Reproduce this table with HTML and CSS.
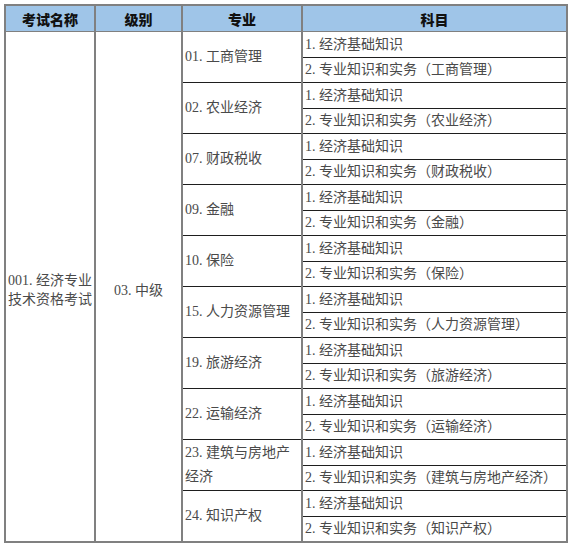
FILE: index.html
```html
<!DOCTYPE html>
<html lang="zh">
<head>
<meta charset="utf-8">
<link rel="stylesheet" href="styles.css">
</head>
<body>
<table class="grid">
  <colgroup>
    <col class="c1"><col class="c2"><col class="c3"><col class="c4">
  </colgroup>
  <thead>
    <tr class="head"><th>考试名称</th><th>级别</th><th>专业</th><th>科目</th></tr>
  </thead>
  <tbody>
    <tr class="r1"><td class="exam" rowspan="20">001. 经济专业技术资格考试</td><td class="level" rowspan="20">03. 中级</td><td class="major" rowspan="2">01. 工商管理</td><td class="subj first">1. 经济基础知识</td></tr>
    <tr class="r2"><td class="subj">2. 专业知识和实务（工商管理）</td></tr>
    <tr class="r1"><td class="major" rowspan="2">02. 农业经济</td><td class="subj first">1. 经济基础知识</td></tr>
    <tr class="r2"><td class="subj">2. 专业知识和实务（农业经济）</td></tr>
    <tr class="r1"><td class="major" rowspan="2">07. 财政税收</td><td class="subj first">1. 经济基础知识</td></tr>
    <tr class="r2"><td class="subj">2. 专业知识和实务（财政税收）</td></tr>
    <tr class="r1"><td class="major" rowspan="2">09. 金融</td><td class="subj first">1. 经济基础知识</td></tr>
    <tr class="r2"><td class="subj">2. 专业知识和实务（金融）</td></tr>
    <tr class="r1"><td class="major" rowspan="2">10. 保险</td><td class="subj first">1. 经济基础知识</td></tr>
    <tr class="r2"><td class="subj">2. 专业知识和实务（保险）</td></tr>
    <tr class="r1"><td class="major" rowspan="2">15. 人力资源管理</td><td class="subj first">1. 经济基础知识</td></tr>
    <tr class="r2"><td class="subj">2. 专业知识和实务（人力资源管理）</td></tr>
    <tr class="r1"><td class="major" rowspan="2">19. 旅游经济</td><td class="subj first">1. 经济基础知识</td></tr>
    <tr class="r2"><td class="subj">2. 专业知识和实务（旅游经济）</td></tr>
    <tr class="r1"><td class="major" rowspan="2">22. 运输经济</td><td class="subj first">1. 经济基础知识</td></tr>
    <tr class="r2"><td class="subj">2. 专业知识和实务（运输经济）</td></tr>
    <tr class="r1"><td class="major" rowspan="2">23. 建筑与房地产经济</td><td class="subj first">1. 经济基础知识</td></tr>
    <tr class="r2"><td class="subj">2. 专业知识和实务（建筑与房地产经济）</td></tr>
    <tr class="r1"><td class="major" rowspan="2">24. 知识产权</td><td class="subj first">1. 经济基础知识</td></tr>
    <tr class="r2"><td class="subj">2. 专业知识和实务（知识产权）</td></tr>
  </tbody>
</table>
</body>
</html>
```
FILE: styles.css
```css
html, body {
  margin: 0;
  padding: 0;
  background: #ffffff;
}
body {
  padding: 4px 0 0 4px;
}
.grid {
  border-collapse: collapse;
  table-layout: fixed;
  width: 562px;
  font-family: "Liberation Serif", "Noto Sans CJK SC", serif;
  font-size: 14px;
  color: #4a4a4a;
  border: 2px solid #808080;
}
.c1 { width: 90px; }
.c2 { width: 87px; }
.c3 { width: 120px; }
.c4 { width: 265px; }
.head th {
  background: #9fc5e8;
  color: #111111;
  font-family: "Noto Sans CJK SC", sans-serif;
  font-weight: 900;
  font-size: 14px;
  height: 25px;
  padding: 0;
  text-align: center;
  vertical-align: middle;
  border-left: 2px solid #808080;
  border-right: 2px solid #808080;
  border-bottom: 1px solid #808080;
}
td {
  padding: 0 0 0 2px;
  vertical-align: middle;
  border-left: 2px solid #808080;
  border-right: 2px solid #808080;
}
tbody tr.r1 {
  height: 26px;
}
tbody tr.r2 {
  height: 25px;
}
.exam {
  line-height: 19px;
  padding-top: 8px;
  padding-right: 2px;
}
.level {
  text-align: center;
  padding: 6px 0 0;
}
.major {
  line-height: 24px;
  border-top: 1px solid #1e1e1e;
}
.subj {
  line-height: 20px;
  white-space: nowrap;
  border-top: 1px solid #1e1e1e;
}
tbody tr:first-child td {
  border-top: 1px solid #808080;
}
```
